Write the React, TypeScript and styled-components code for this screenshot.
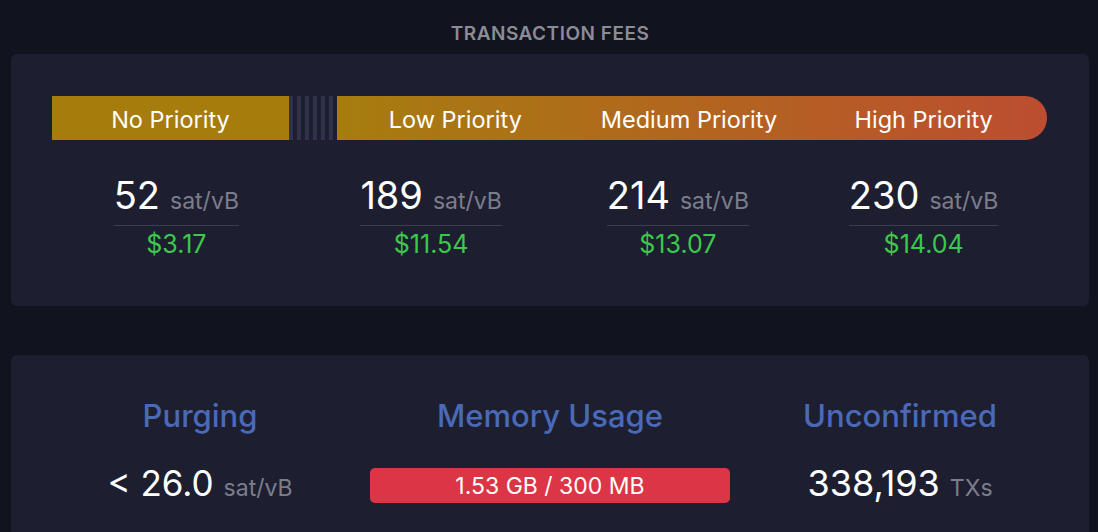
import styled, { createGlobalStyle } from "styled-components";

const GlobalStyle = createGlobalStyle`
  html, body {
    margin: 0;
    padding: 0;
    background: #11131f;
  }
  body {
    font-family: "Inter", "Noto Sans", sans-serif;
    color: #ffffff;
  }
`;

const Page = styled.div`
  width: 1098px;
  height: 532px;
  overflow: hidden;
  padding: 0 9px 0 11px;
  box-sizing: border-box;
`;

const Heading = styled.h2`
  margin: 0;
  padding-top: 22px;
  height: 54px;
  box-sizing: border-box;
  text-align: center;
  font-size: 19px;
  line-height: 23px;
  font-weight: 600;
  letter-spacing: 0.5px;
  color: #8b8c96;
`;

const Card = styled.div<{ $height?: number }>`
  background: #1d1f31;
  border-radius: 6px;
  box-sizing: border-box;
  height: ${(p) => (p.$height ? `${p.$height}px` : "auto")};
`;

const FeeCard = styled(Card)`
  padding: 42px 42px 0 41px;
`;

const PriorityBar = styled.div`
  display: flex;
  height: 44px;
`;

const NoPriority = styled.div`
  width: 237px;
  background: #a67c0c;
  display: flex;
  align-items: center;
  justify-content: center;
  font-size: 23.5px;
  font-weight: 400;
  padding-top: 2px;
  box-sizing: border-box;
`;

const Stripes = styled.div`
  width: 48px;
  background: repeating-linear-gradient(
    90deg,
    #2e3349 0 4px,
    #1d1f31 4px 8px
  );
`;

const GradientBar = styled.div`
  flex: 1;
  display: grid;
  grid-template-columns: repeat(3, 1fr);
  background: linear-gradient(90deg, #a67d0f 0%, #b1681d 45%, #bc4d31 100%);
  border-radius: 0 22px 22px 0;
`;

const Label = styled.div<{ $shift?: number }>`
  display: flex;
  align-items: center;
  justify-content: center;
  font-size: 23.5px;
  font-weight: 400;
  white-space: nowrap;
  padding-top: 2px;
  margin-left: ${(p) => p.$shift ?? 0}px;
`;

const FeeRow = styled.div`
  display: grid;
  grid-template-columns: repeat(4, 1fr);
  margin-top: 33px;
`;

const FeeItem = styled.div<{ $shift?: number }>`
  display: flex;
  flex-direction: column;
  align-items: center;
  margin-left: ${(p) => p.$shift ?? 0}px;
`;

const FeeBox = styled.div`
  display: flex;
  flex-direction: column;
  align-items: center;
`;

const FeeRate = styled.div`
  display: flex;
  align-items: baseline;
  gap: 10px;
  padding-bottom: 2px;
  border-bottom: 1px solid #3c3f54;
  line-height: 44px;
`;

const Big = styled.span<{ $size?: number }>`
  font-size: ${(p) => p.$size ?? 38}px;
  font-weight: 400;
  color: #ffffff;
`;

const Unit = styled.span<{ $size?: number }>`
  font-size: ${(p) => p.$size ?? 23}px;
  color: #7c7d8b;
`;

const Fiat = styled.div`
  margin-top: 3px;
  font-size: 25px;
  line-height: 30px;
  color: #3bc94b;
`;

const GAP = 49;

const MempoolCard = styled(Card)`
  margin-top: ${GAP}px;
  padding: 42px 19px 0 19px;
  height: 200px;
`;

const StatsGrid = styled.div`
  display: grid;
  grid-template-columns: repeat(3, 1fr);
  row-gap: 29px;
  align-items: center;
  justify-items: center;
`;

const StatTitle = styled.div`
  font-size: 31px;
  line-height: 37px;
  font-weight: 500;
  color: #4a6ab8;
`;

const StatValue = styled.div`
  display: flex;
  align-items: baseline;
  gap: 10px;
  line-height: 40px;
`;

const MemoryBar = styled.div`
  width: 360px;
  height: 35px;
  border-radius: 5px;
  background: #dc3545;
  display: flex;
  align-items: center;
  justify-content: center;
  font-size: 23px;
  color: #ffffff;
`;

const fees = [
  { rate: 52, fiat: "$3.17", shift: 0 },
  { rate: 189, fiat: "$11.54", shift: 12 },
  { rate: 214, fiat: "$13.07", shift: 8 },
  { rate: 230, fiat: "$14.04", shift: 2 },
];

export default function App() {
  return (
    <>
      <GlobalStyle />
      <Page>
        <Heading>TRANSACTION FEES</Heading>
        <FeeCard $height={252}>
          <PriorityBar>
            <NoPriority>No Priority</NoPriority>
            <Stripes />
            <GradientBar>
              <Label>Low Priority</Label>
              <Label $shift={-6}>Medium Priority</Label>
              <Label $shift={-10}>High Priority</Label>
            </GradientBar>
          </PriorityBar>
          <FeeRow>
            {fees.map((f) => (
              <FeeItem key={f.rate} $shift={f.shift}>
                <FeeBox>
                  <FeeRate>
                    <Big>{f.rate}</Big>
                    <Unit>sat/vB</Unit>
                  </FeeRate>
                  <Fiat>{f.fiat}</Fiat>
                </FeeBox>
              </FeeItem>
            ))}
          </FeeRow>
        </FeeCard>
        <MempoolCard>
          <StatsGrid>
            <StatTitle>Purging</StatTitle>
            <StatTitle>Memory Usage</StatTitle>
            <StatTitle>Unconfirmed</StatTitle>
            <StatValue>
              <Big $size={35}>&lt; 26.0</Big>
              <Unit>sat/vB</Unit>
            </StatValue>
            <MemoryBar>1.53 GB / 300 MB</MemoryBar>
            <StatValue>
              <Big $size={36}>338,193</Big>
              <Unit>TXs</Unit>
            </StatValue>
          </StatsGrid>
        </MempoolCard>
      </Page>
    </>
  );
}
